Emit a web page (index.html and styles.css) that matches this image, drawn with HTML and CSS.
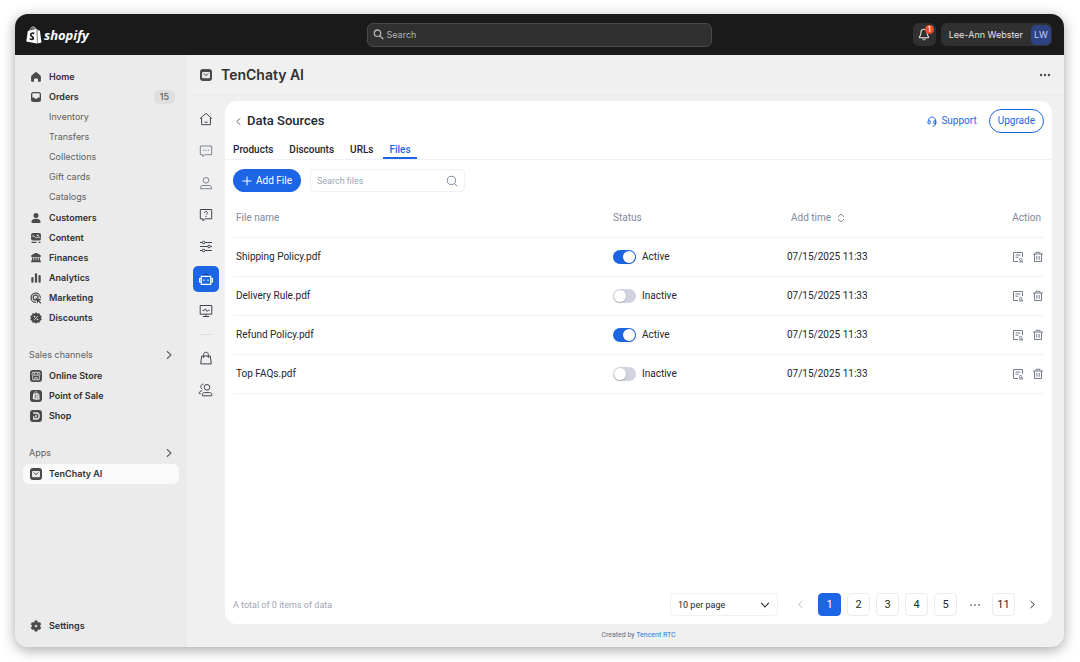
FILE: index.html
```html
<!DOCTYPE html>
<html lang="en">
<head>
    <meta charset="UTF-8" />
    <meta name="viewport" content="width=device-width, initial-scale=1.0" />
    <title>TenChaty AI - Data Sources</title>
    <link rel="stylesheet" href="styles.css">
</head>
<body>
    <!-- Shared icons -->
    <svg class="sprite" aria-hidden="true">
        <symbol id="i-chevron" viewBox="0 0 10 10"><path d="M3.2 1.5 7 5 3.2 8.5" fill="none" stroke="currentColor" stroke-width="1.1" stroke-linecap="round" stroke-linejoin="round"/></symbol>
        <symbol id="i-app" viewBox="0 0 12 12"><rect width="12" height="12" rx="3" fill="#4a4a4a"/><rect x="2" y="3" width="8" height="6.2" rx="1" fill="#e8e8e8"/><path d="m3.6 4.6 2.4 1.9 2.4-1.9" fill="none" stroke="#4a4a4a" stroke-width=".9"/></symbol>
        <symbol id="i-edit" viewBox="0 0 12 12"><g fill="none" stroke="currentColor"><path d="M6 10.5H1.500v-9h9V6M3.500 4h5M3.500 6.200h3"/><rect x="7.500" y="7.500" width="2.200" height="2" rx=".8"/><path d="M7 10.900h4M10.300 9.500v1.400"/></g></symbol>
        <symbol id="i-trash" viewBox="0 0 12 12"><path d="M1 3h10M4 2.800V1.300h4v1.500M2.500 3v7.500h7V3M4.800 5v3.800M7.200 5v3.800" fill="none" stroke="currentColor"/></symbol>
    </svg>

    <div class="window">
        <header class="topbar">
            <a href="#" class="logo" aria-label="shopify">
                <svg width="16" height="18" viewBox="0 0 16 18"><path d="M1.8 5 10.6 2.8 11 17.5.3 15.6z" fill="#fff"/><path d="m11.3 3 1.1 1.4 1.5.2 1.6 11.8-4 1z" fill="#fff"/><path d="M3.5 5.4C4 2.6 5.7.9 7.2.8c1.400 0 2.100 1.400 2.100 3.300M5.700 4.700c.4-2 1.600-3.200 2.700-2.900.9.200 1.300 1 1.500 2" fill="none" stroke="#fff" stroke-width=".7"/><path d="M8.300 7.500C6.800 6.700 4.700 7.100 4.700 8.700c0 1.700 2.700 1.800 2.600 3.400-.1 1.500-2 1.600-3.500.6" fill="none" stroke="#1a1a1a" stroke-width="1.700"/></svg>
                <span class="logo-text">shopify</span>
            </a>
            <label class="top-search">
                <svg width="11" height="11" viewBox="0 0 11 11"><path d="M4.500 1a3.200 3.200 0 1 0 0 6.400 3.200 3.200 0 0 0 0-6.400ZM6.900 6.800l3 3" fill="none" stroke="#b5b5b5" stroke-width="1.300" stroke-linecap="round"/></svg>
                <input type="search" placeholder="Search" aria-label="Search">
            </label>
            <div class="top-actions">
                <button class="bell" aria-label="Notifications">
                    <svg width="12" height="13" viewBox="0 0 12 13"><path d="M6 1.300C3.800 1.300 2.900 3 2.900 4.800c0 2-.5 2.700-1.200 3.700-.5.700-.2 1.300.5 1.300h7.600c.7 0 1-.6.5-1.300-.7-1-1.200-1.700-1.200-3.700C9.100 3 8.200 1.300 6 1.300Z" fill="none" stroke="#e3e3e3" stroke-width="1.100"/><path d="M4.300 10.400c.2 1 .9 1.400 1.700 1.400s1.500-.4 1.700-1.400" fill="none" stroke="#e3e3e3"/></svg>
                    <span class="badge">1</span>
                </button>
                <button class="user">Lee-Ann Webster <span class="avatar">LW</span></button>
            </div>
        </header>

        <div class="layout">
            <nav class="sidebar">
                <a href="#" class="nav-item"><svg width="12" height="12" viewBox="0 0 12 12"><path d="M5 1.400a1.500 1.500 0 0 1 2 0l3.400 3c.3.300.5.700.5 1.200v3.800c0 .8-.5 1.300-1.300 1.300H8V8.300c0-.6-.4-.9-.9-.9H4.900c-.5 0-.9.300-.9.900v2.400H2.400c-.8 0-1.300-.5-1.300-1.300V5.600c0-.5.2-.9.5-1.200z" fill="currentColor"/></svg>Home</a>
                <a href="#" class="nav-item"><svg width="12" height="12" viewBox="0 0 12 12"><path fill-rule="evenodd" d="M3.500 1h5A2.500 2.500 0 0 1 11 3.500v5A2.500 2.500 0 0 1 8.500 11h-5A2.500 2.500 0 0 1 1 8.500v-5A2.500 2.500 0 0 1 3.500 1Zm-.3 1.300a.9.9 0 0 0-.9.9v3.300h1.600c.4 0 .5.300.7.700.2.400.5.600.9.600h1c.4 0 .7-.2.9-.6.2-.4.300-.7.700-.7h1.600V3.200a.9.9 0 0 0-.9-.9z" fill="currentColor"/></svg>Orders<span class="count">15</span></a>
                <div class="sub-nav">
                    <a href="#" class="nav-item">Inventory</a>
                    <a href="#" class="nav-item">Transfers</a>
                    <a href="#" class="nav-item">Collections</a>
                    <a href="#" class="nav-item">Gift cards</a>
                    <a href="#" class="nav-item">Catalogs</a>
                </div>
                <a href="#" class="nav-item"><svg width="12" height="12" viewBox="0 0 12 12" fill="currentColor"><circle cx="6" cy="3.400" r="2.500"/><path d="M1.400 10c0-2 2.100-3.200 4.600-3.200s4.600 1.200 4.600 3.200c0 .6-.4.900-1 .9H2.400c-.6 0-1-.3-1-.9Z"/></svg>Customers</a>
                <a href="#" class="nav-item"><svg width="12" height="12" viewBox="0 0 12 12"><rect x="1" y="1" width="10" height="7.500" rx="2" fill="currentColor"/><circle cx="7.800" cy="3.400" r=".9" fill="#ebebeb"/><path d="M1.600 4.700C3.200 3.200 4.200 4 5 5s1.500 1 2.400.5 1.800-.5 3-.1" fill="none" stroke="#ebebeb" stroke-width=".9"/><path d="M1.500 10.400h5M8.500 10.400h2" stroke="currentColor" stroke-width="1.200"/></svg>Content</a>
                <a href="#" class="nav-item"><svg width="12" height="12" viewBox="0 0 12 12" fill="currentColor"><path d="M5.300 1.100a1.500 1.500 0 0 1 1.400 0L10.300 3c1 .6.700 2-.3 2H2c-1 0-1.300-1.400-.3-2zM1.900 5.400h1.500v3H1.900zM4.100 5.400h1.500v3H4.100zM6.400 5.400h1.500v3H6.400zM8.600 5.400h1.500v3H8.600zM1.500 8.200h9l.5 2.100H1z"/></svg>Finances</a>
                <a href="#" class="nav-item"><svg width="12" height="12" viewBox="0 0 12 12" fill="currentColor"><rect x="1.300" y="5" width="2.200" height="5.800" rx="1"/><rect x="4.900" y="1.200" width="2.200" height="9.600" rx="1"/><rect x="8.500" y="3" width="2.200" height="7.800" rx="1"/></svg>Analytics</a>
                <a href="#" class="nav-item"><svg width="12" height="12" viewBox="0 0 12 12"><path d="M5.500 10.300A4.600 4.600 0 1 1 10.300 5.500M5.500 8A2.400 2.400 0 1 1 8 5.600" fill="none" stroke="currentColor" stroke-width="1.300" stroke-linecap="round"/><path d="m5.400 5.400 6 2.200-2.200 1.100 2.200 2-1 1-2-2.200-1 2z" fill="currentColor"/></svg>Marketing</a>
                <a href="#" class="nav-item"><svg width="12" height="12" viewBox="0 0 12 12"><path d="M6 .5 7.500 1.700l1.900-.2.500 1.800 1.600 1L10.900 6l.6 1.700-1.600 1-.5 1.800-1.900-.2L6 11.500l-1.500-1.200-1.900.2-.5-1.800-1.600-1L1.100 6 .5 4.300l1.600-1 .5-1.800 1.900.2z" fill="currentColor" stroke="currentColor" stroke-width=".4" stroke-linejoin="round"/><path d="m4.200 7.800 3.600-3.600" stroke="#ebebeb" stroke-width=".9"/><circle cx="4.500" cy="4.600" r=".8" fill="#ebebeb"/><circle cx="7.500" cy="7.500" r=".8" fill="#ebebeb"/></svg>Discounts</a>

                <button class="nav-title">Sales channels <svg width="10" height="10"><use href="#i-chevron"/></svg></button>
                <a href="#" class="nav-item"><svg width="12" height="12" viewBox="0 0 12 12"><rect width="12" height="12" rx="3" fill="currentColor"/><path d="M2.600 2.300h6.800l.7 2.200c0 1.300-1.900 1.300-2.100.1-.2 1.200-1.900 1.200-2 0-.2 1.200-1.900 1.200-2.100 0C3.800 5.800 2 5.700 1.900 4.500zM2.700 6v3.800h6.600V6M4.800 9.700V7.600h2.400v2.100M4.700 2.500 4 4.500M7.300 2.500l.7 2" fill="none" stroke="#ebebeb" stroke-width=".8"/></svg>Online Store</a>
                <a href="#" class="nav-item"><svg width="12" height="12" viewBox="0 0 12 12"><rect width="12" height="12" rx="3" fill="currentColor"/><path d="m3.200 3.800 4.500-.7v6.800l-5-.9zM8.200 3.200l1 .6.5 5.500-1.500.6z" fill="#ebebeb"/><path d="M4.300 3.600c.2-1.400 1-2 1.700-2s1 .7 1 1.800" fill="none" stroke="#ebebeb" stroke-width=".7"/><path d="M6.500 5.300c-.8-.4-1.600-.1-1.600.4 0 .7 1.300.8 1.200 1.500 0 .7-.9.7-1.600.3" fill="none" stroke="currentColor" stroke-width=".8"/></svg>Point of Sale</a>
                <a href="#" class="nav-item"><svg width="12" height="12" viewBox="0 0 12 12"><rect width="12" height="12" rx="3" fill="currentColor"/><path d="M3.200 3h3a3 3 0 0 1 0 6H3.800V6.300" fill="none" stroke="#ebebeb" stroke-width="1.300"/><path d="M5.300 5h1.500v2.200H5.300z" fill="#ebebeb"/></svg>Shop</a>

                <button class="nav-title">Apps <svg width="10" height="10"><use href="#i-chevron"/></svg></button>
                <a href="#" class="nav-item active"><svg width="12" height="12"><use href="#i-app"/></svg>TenChaty AI</a>

                <a href="#" class="nav-item settings"><svg width="12" height="12" viewBox="0 0 12 12"><path fill-rule="evenodd" d="M4.900.8h2.200l.4 1.500.9.500 1.500-.4L11 4.300 9.900 5.400v1.200L11 7.700 9.900 9.600l-1.500-.4-.9.500-.4 1.500H4.900l-.4-1.500-.9-.5-1.500.4L1 7.700l1.100-1.100V5.400L1 4.300l1.100-1.900 1.500.4.900-.5zM6 4.500a1.500 1.500 0 1 0 0 3 1.500 1.500 0 0 0 0-3Z" fill="currentColor" stroke="currentColor" stroke-width=".5" stroke-linejoin="round"/></svg>Settings</a>
            </nav>

            <main class="content">
                <div class="app-header">
                    <svg width="12" height="12"><use href="#i-app"/></svg>
                    <h1>TenChaty AI</h1>
                    <button class="more" aria-label="More actions"><svg width="12" height="4" viewBox="0 0 12 4" fill="#4a4a4a"><circle cx="2" cy="2" r="1.200"/><circle cx="6" cy="2" r="1.200"/><circle cx="10" cy="2" r="1.200"/></svg></button>
                </div>

                <div class="app-body">
                    <nav class="rail">
                        <a href="#" class="rail-item" aria-label="Home"><svg width="14" height="14" viewBox="0 0 14 14"><path d="M1 6.700 7 1.300l6 5.400M2.600 5.700v7h8.800v-7M5.400 10.200h3.200"/></svg></a>
                        <a href="#" class="rail-item muted" aria-label="Chats"><svg width="14" height="14" viewBox="0 0 14 14"><path d="M1.300 2h11.400v8.700H6l-2.200 1.800v-1.800H1.300zM3.900 6.300h1.200M6.400 6.300h1.200M8.900 6.300h1.200"/></svg></a>
                        <a href="#" class="rail-item muted" aria-label="Contacts"><svg width="14" height="14" viewBox="0 0 14 14"><circle cx="7" cy="4.300" r="2.800"/><path d="M1.400 12.700v-1c0-1.400 1-2.200 2.500-2.200h6.200c1.500 0 2.500.8 2.500 2.200v1z"/></svg></a>
                        <a href="#" class="rail-item" aria-label="Questions"><svg width="14" height="14" viewBox="0 0 14 14"><path d="M1.300 1.500h11.400v9.300H6l-2.200 1.900v-1.900H1.300zM5.500 4.900c0-2 3-2 3-.1 0 1.100-1.500 1.100-1.500 2.300M7 8v1"/></svg></a>
                        <a href="#" class="rail-item" aria-label="Preferences"><svg width="14" height="14" viewBox="0 0 14 14"><path d="M1 2.500h2.300M6 2.500h7M1 6.500h7.700M11.400 6.500H13M1 10.500h2.300M6 10.500h7"/><circle cx="4.600" cy="2.500" r="1.300"/><circle cx="10" cy="6.500" r="1.300"/><circle cx="4.600" cy="10.500" r="1.300"/></svg></a>
                        <a href="#" class="rail-item active" aria-label="AI bot"><svg width="14" height="14" viewBox="0 0 14 14"><path d="M2.300 4.300h9.400v8H2.300zM2.300 6.500H.6V10h1.700M11.700 6.500h1.700V10h-1.700M5 7.500v1.600M9 7.500v1.600" stroke-width="1.200"/><path class="antenna" d="M4.500 3.500c.4-1.800 4.600-1.800 5 0"/></svg></a>
                        <a href="#" class="rail-item" aria-label="Monitor"><svg width="14" height="14" viewBox="0 0 14 14"><path d="M1.200 1.500h11.600v8.700H1.200zM7 10.200v2.400M3.900 12.500h6.200M3.500 6.500h1.600l1.200-1.700L8 7.500l1-1.200h1.500"/></svg></a>
                        <hr>
                        <a href="#" class="rail-item" aria-label="Store"><svg width="14" height="14" viewBox="0 0 14 14"><path d="M2.700 5h8.600l1 7.900H1.700zM4.700 7V3.500c0-3 4.600-3 4.600 0V7"/></svg></a>
                        <a href="#" class="rail-item" aria-label="Team"><svg width="16" height="14" viewBox="0 0 16 14"><circle cx="9" cy="4.300" r="2.800"/><path d="M4.400 12.800v-1.200c0-1.300.9-2 2.200-2h5c1.300 0 2.200.7 2.200 2v1.200zM5.600 1.200C3.900.9 2.800 2.200 2.800 3.700c0 1.200.7 2 1.600 2.500M4 7.800c-1.800.2-2.800.9-2.800 2.800h1.600"/></svg></a>
                    </nav>

                    <div class="main">
                        <section class="card">
                            <div class="card-header">
                                <a href="#" class="back" aria-label="Back"><svg class="flip" width="9" height="9"><use href="#i-chevron"/></svg></a>
                                <h2>Data Sources</h2>
                                <a href="#" class="support"><svg width="10" height="11" viewBox="0 0 10 11" fill="none" stroke="currentColor" stroke-width=".9"><path d="M1.500 5V4.500C1.500 2.400 3 1 5 1s3.500 1.400 3.500 3.500V8.200c0 1.200-.7 1.800-1.800 1.800H5.500M3.200 4.800H1v3h2.200zM6.800 4.800H9v3H6.800z"/></svg>Support</a>
                                <button class="upgrade">Upgrade</button>
                            </div>

                            <nav class="tabs">
                                <a href="#">Products</a>
                                <a href="#">Discounts</a>
                                <a href="#">URLs</a>
                                <a href="#" class="active">Files</a>
                            </nav>

                            <div class="toolbar">
                                <button class="btn-add"><svg width="10" height="10" viewBox="0 0 10 10"><path d="M5 .5v9M.5 5h9" stroke="currentColor"/></svg>Add File</button>
                                <label class="file-search">
                                    <input type="search" placeholder="Search files" aria-label="Search files">
                                    <svg width="12" height="12" viewBox="0 0 12 12" fill="none" stroke="#7f889b"><circle cx="5.400" cy="5.400" r="4.100"/><path d="m8.400 8.400 2.800 2.800"/></svg>
                                </label>
                            </div>

                            <table>
                                <thead>
                                    <tr>
                                        <th class="col-name">File name</th>
                                        <th class="col-status">Status</th>
                                        <th class="col-time"><button class="sort">Add time <svg width="8" height="10" viewBox="0 0 8 10" fill="none" stroke="currentColor"><path d="M1 3.800 4 1l3 2.800M1 6.200 4 9l3-2.800"/></svg></button></th>
                                        <th class="col-action">Action</th>
                                    </tr>
                                </thead>
                                <tbody>
                                    <tr>
                                        <td>Shipping Policy.pdf</td>
                                        <td><label class="switch"><input type="checkbox" role="switch" checked>Active</label></td>
                                        <td>07/15/2025 11:33</td>
                                        <td class="cell-action"><div class="actions"><button aria-label="Edit"><svg width="12" height="12"><use href="#i-edit"/></svg></button><button aria-label="Delete"><svg width="12" height="12"><use href="#i-trash"/></svg></button></div></td>
                                    </tr>
                                    <tr>
                                        <td>Delivery Rule.pdf</td>
                                        <td><label class="switch"><input type="checkbox" role="switch">Inactive</label></td>
                                        <td>07/15/2025 11:33</td>
                                        <td class="cell-action"><div class="actions"><button aria-label="Edit"><svg width="12" height="12"><use href="#i-edit"/></svg></button><button aria-label="Delete"><svg width="12" height="12"><use href="#i-trash"/></svg></button></div></td>
                                    </tr>
                                    <tr>
                                        <td>Refund Policy.pdf</td>
                                        <td><label class="switch"><input type="checkbox" role="switch" checked>Active</label></td>
                                        <td>07/15/2025 11:33</td>
                                        <td class="cell-action"><div class="actions"><button aria-label="Edit"><svg width="12" height="12"><use href="#i-edit"/></svg></button><button aria-label="Delete"><svg width="12" height="12"><use href="#i-trash"/></svg></button></div></td>
                                    </tr>
                                    <tr>
                                        <td>Top FAQs.pdf</td>
                                        <td><label class="switch"><input type="checkbox" role="switch">Inactive</label></td>
                                        <td>07/15/2025 11:33</td>
                                        <td class="cell-action"><div class="actions"><button aria-label="Edit"><svg width="12" height="12"><use href="#i-edit"/></svg></button><button aria-label="Delete"><svg width="12" height="12"><use href="#i-trash"/></svg></button></div></td>
                                    </tr>
                                </tbody>
                            </table>

                            <div class="pagination">
                                <span class="total">A total of 0 items of data</span>
                                <div class="page-size">
                                    <select aria-label="Rows per page">
                                        <option>10 per page</option>
                                    </select>
                                    <svg width="10" height="10"><use href="#i-chevron"/></svg>
                                </div>
                                <button class="page plain" aria-label="Previous page" disabled><svg class="flip" width="9" height="9"><use href="#i-chevron"/></svg></button>
                                <button class="page current">1</button>
                                <button class="page">2</button>
                                <button class="page">3</button>
                                <button class="page">4</button>
                                <button class="page">5</button>
                                <button class="page plain" aria-label="More pages"><svg width="12" height="4" viewBox="0 0 12 4" fill="currentColor"><circle cx="2" cy="2" r=".8"/><circle cx="6" cy="2" r=".8"/><circle cx="10" cy="2" r=".8"/></svg></button>
                                <button class="page">11</button>
                                <button class="page plain" aria-label="Next page"><svg width="9" height="9"><use href="#i-chevron"/></svg></button>
                            </div>
                        </section>
                        <footer>Created by <a href="#">Tencent RTC</a></footer>
                    </div>
                </div>
            </main>
        </div>
    </div>
</body>
</html>
```
FILE: styles.css
```css
* {
    box-sizing: border-box;
}

body {
    font-family: Roboto, "Liberation Sans", sans-serif;
    font-size: 10px;
    line-height: 14px;
    color: #22262e;
    background-color: #fff;
    margin: 0;
    padding: 14px 16px 15px 15px;
    min-height: 100vh;
    display: flex;
}

a {
    color: inherit;
    text-decoration: none;
}

button, input, select {
    font: inherit;
    color: inherit;
    background: none;
    border: none;
    margin: 0;
    padding: 0;
}

button {
    cursor: pointer;
}

svg {
    flex: none;
    display: block;
}

.sprite {
    position: absolute;
    width: 0;
    height: 0;
}

.flip {
    transform: scaleX(-1);
}

.window {
    flex: 1;
    min-width: 0;
    display: flex;
    flex-direction: column;
    border-radius: 13px;
    overflow: hidden;
    background-color: #f0f0f0;
    box-shadow: 0 3px 14px rgba(0, 0, 0, 0.35);
}

/* Top bar */
.topbar {
    height: 41px;
    padding: 0 12px 0 11px;
    display: grid;
    grid-template-columns: 1fr minmax(0, 345px) 1fr;
    align-items: center;
    background-color: #1a1a1a;
    color: #e3e3e3;
    font-family: Inter, sans-serif;
    font-size: 9px;
}

.logo {
    display: flex;
    align-items: center;
    gap: 2px;
    color: #fff;
}

.logo-text {
    font: italic 700 13px/18px "Open Sans", sans-serif;
}

.top-search {
    height: 24px;
    padding: 0 5px;
    display: flex;
    align-items: center;
    gap: 3px;
    border: 1px solid #4a4a4a;
    border-radius: 6px;
    background-color: #303030;
}

.top-search input {
    flex: 1;
    min-width: 0;
    outline: none;
}

.top-search input::placeholder {
    color: #b5b5b5;
}

.top-actions {
    display: flex;
    justify-content: flex-end;
    gap: 5px;
}

.bell, .user {
    height: 23px;
    display: flex;
    align-items: center;
    border-radius: 6px;
    background-color: #303030;
}

.bell {
    position: relative;
    width: 23px;
    justify-content: center;
}

.badge {
    position: absolute;
    top: 2px;
    right: 2px;
    width: 9px;
    height: 9px;
    border-radius: 50%;
    background-color: #ee4b2b;
    color: #fff;
    font-size: 7px;
    line-height: 9px;
    font-weight: 600;
}

.user {
    padding: 0 1px 0 8px;
    gap: 8px;
}

.avatar {
    width: 20px;
    height: 20px;
    border-radius: 5px;
    background-color: #2d4383;
    color: #c4d0f5;
    line-height: 20px;
}

.layout {
    flex: 1;
    display: flex;
}

/* Sidebar */
.sidebar {
    width: 172px;
    padding: 12px 8px 11px;
    display: flex;
    flex-direction: column;
    background-color: #ebebeb;
    color: #303030;
    font-family: Inter, sans-serif;
    font-size: 9px;
}

.nav-item {
    height: 20px;
    padding: 0 4px 0 7px;
    display: flex;
    align-items: center;
    gap: 7px;
    border-radius: 6px;
    font-weight: 600;
}

.nav-item svg {
    color: #4a4a4a;
}

.nav-item.active {
    background-color: #fafafa;
}

.count {
    margin-left: auto;
    padding: 0 6px;
    border-radius: 6px;
    background-color: #dedede;
    color: #616161;
    font-weight: 500;
}

.sub-nav {
    margin-bottom: 1px;
}

.sub-nav .nav-item {
    padding-left: 26px;
    color: #616161;
    font-weight: 400;
}

.nav-title {
    height: 20px;
    margin: 17px 0 1px;
    padding: 0 5px 0 6px;
    display: flex;
    align-items: center;
    justify-content: space-between;
    color: #616161;
}

.settings {
    margin-top: auto;
}

/* App */
.content {
    flex: 1;
    min-width: 0;
    display: flex;
    flex-direction: column;
}

.app-header {
    height: 41px;
    padding: 0 13px;
    display: flex;
    align-items: center;
    gap: 9px;
    border-bottom: 1px solid #ebebeb;
    font-family: Inter, sans-serif;
}

.app-header h1 {
    margin: 0;
    color: #303030;
    font-size: 14px;
    font-weight: 600;
    line-height: 20px;
}

.more {
    margin-left: auto;
}

.app-body {
    flex: 1;
    display: flex;
}

.rail {
    width: 38px;
    padding-top: 10px;
    display: flex;
    flex-direction: column;
    align-items: center;
    gap: 6px;
}

.rail-item {
    width: 26px;
    height: 26px;
    display: flex;
    align-items: center;
    justify-content: center;
    border-radius: 5px;
    color: #40454f;
}

.rail-item svg {
    fill: none;
    stroke: currentColor;
}

.rail-item.muted {
    color: #7d8390;
}

.rail-item.active {
    background-color: #1c66e5;
    color: #fff;
}

.rail-item .antenna {
    stroke: #16356f;
}

.rail hr {
    width: 14px;
    margin: 4px 0;
    border: none;
    border-top: 1px solid #dfdfdf;
}

.main {
    flex: 1;
    min-width: 0;
    padding: 5px 12px 0 0;
    display: flex;
    flex-direction: column;
}

.card {
    flex: 1;
    display: flex;
    flex-direction: column;
    border-radius: 12px;
    background-color: #fff;
}

.card-header {
    padding: 8px 8px 0 9px;
    display: flex;
    align-items: center;
}

.card-header h2 {
    margin: 0 auto 0 4px;
    font-size: 13px;
    font-weight: 500;
    line-height: 18px;
}

.back {
    color: #666d7c;
}

.support {
    margin-right: 12px;
    display: flex;
    align-items: center;
    gap: 4px;
    color: #1c66e5;
}

.upgrade {
    height: 24px;
    padding: 0 8px;
    border: 1px solid #1c66e5;
    border-radius: 12px;
    color: #1c66e5;
}

.tabs {
    padding: 7px 2px 0;
    display: flex;
    gap: 4px;
    border-bottom: 1px solid #eff1f6;
}

.tabs a {
    padding: 3px 6px 0;
    border-bottom: 2px solid transparent;
    font-weight: 500;
    line-height: 14px;
}

.tabs .active {
    color: #1c66e5;
    border-color: #1c66e5;
}

.toolbar {
    padding: 9px 8px 0;
    display: flex;
    gap: 9px;
}

.btn-add {
    height: 23px;
    padding: 0 9px;
    display: flex;
    align-items: center;
    gap: 4px;
    border-radius: 12px;
    background-color: #1c66e5;
    color: #fff;
}

.file-search {
    width: 155px;
    height: 23px;
    padding: 0 6px;
    display: flex;
    align-items: center;
    border: 1px solid #eff1f6;
    border-radius: 4px;
    font-size: 9px;
}

.file-search input {
    flex: 1;
    min-width: 0;
    outline: none;
}

.file-search input::placeholder {
    color: #a0a6b3;
}

table {
    margin: 8px 8px 0;
    border-collapse: collapse;
    table-layout: fixed;
}

th, td {
    height: 39px;
    padding: 0 3px;
    border-bottom: 1px solid #eff1f6;
    text-align: left;
}

th {
    height: 37px;
    color: #7f889b;
    font-weight: 400;
}

.col-status {
    width: 174px;
}

.col-time {
    width: 190px;
}

.col-action {
    width: 70px;
    text-align: right;
}

.cell-action {
    padding-right: 0;
}

.sort {
    margin-left: 4px;
    display: flex;
    align-items: center;
    gap: 6px;
}

.switch {
    display: flex;
    align-items: center;
    gap: 6px;
}

.switch input {
    appearance: none;
    width: 23px;
    height: 14px;
    padding: 1px;
    display: flex;
    border-radius: 7px;
    background-color: #d1d4e0;
}

.switch input::before {
    content: "";
    width: 12px;
    height: 12px;
    border-radius: 50%;
    background-color: #fff;
    box-shadow: 0 1px 2px rgba(0, 0, 0, 0.2);
}

.switch input:checked {
    justify-content: flex-end;
    background-color: #1c66e5;
}

.actions {
    display: flex;
    justify-content: flex-end;
    gap: 8px;
    color: #757d8d;
}

/* Pagination */
.pagination {
    margin-top: auto;
    padding: 8px;
    display: flex;
    align-items: center;
    gap: 6px;
}

.total {
    margin-right: auto;
    color: #a0a6b3;
    font-size: 9px;
}

.page-size {
    position: relative;
    margin-right: 5px;
}

.page-size select {
    appearance: none;
    width: 108px;
    height: 23px;
    padding: 0 7px;
    display: block;
    border: 1px solid #eff1f6;
    border-radius: 4px;
    font-size: 9px;
}

.page-size svg {
    position: absolute;
    top: 7px;
    right: 8px;
    transform: rotate(90deg);
    pointer-events: none;
}

.page {
    width: 23px;
    height: 23px;
    display: flex;
    align-items: center;
    justify-content: center;
    border: 1px solid #e9ecf3;
    border-radius: 4px;
    font-size: 11px;
}

.page.current {
    border-color: #1c66e5;
    background-color: #1c66e5;
    color: #fff;
}

.page.plain {
    border-color: transparent;
}

.page:disabled {
    color: #b5bac6;
}

footer {
    height: 23px;
    text-align: center;
    color: #666d7c;
    font-size: 7px;
    line-height: 23px;
}

footer a {
    color: #1c78e0;
}
```
